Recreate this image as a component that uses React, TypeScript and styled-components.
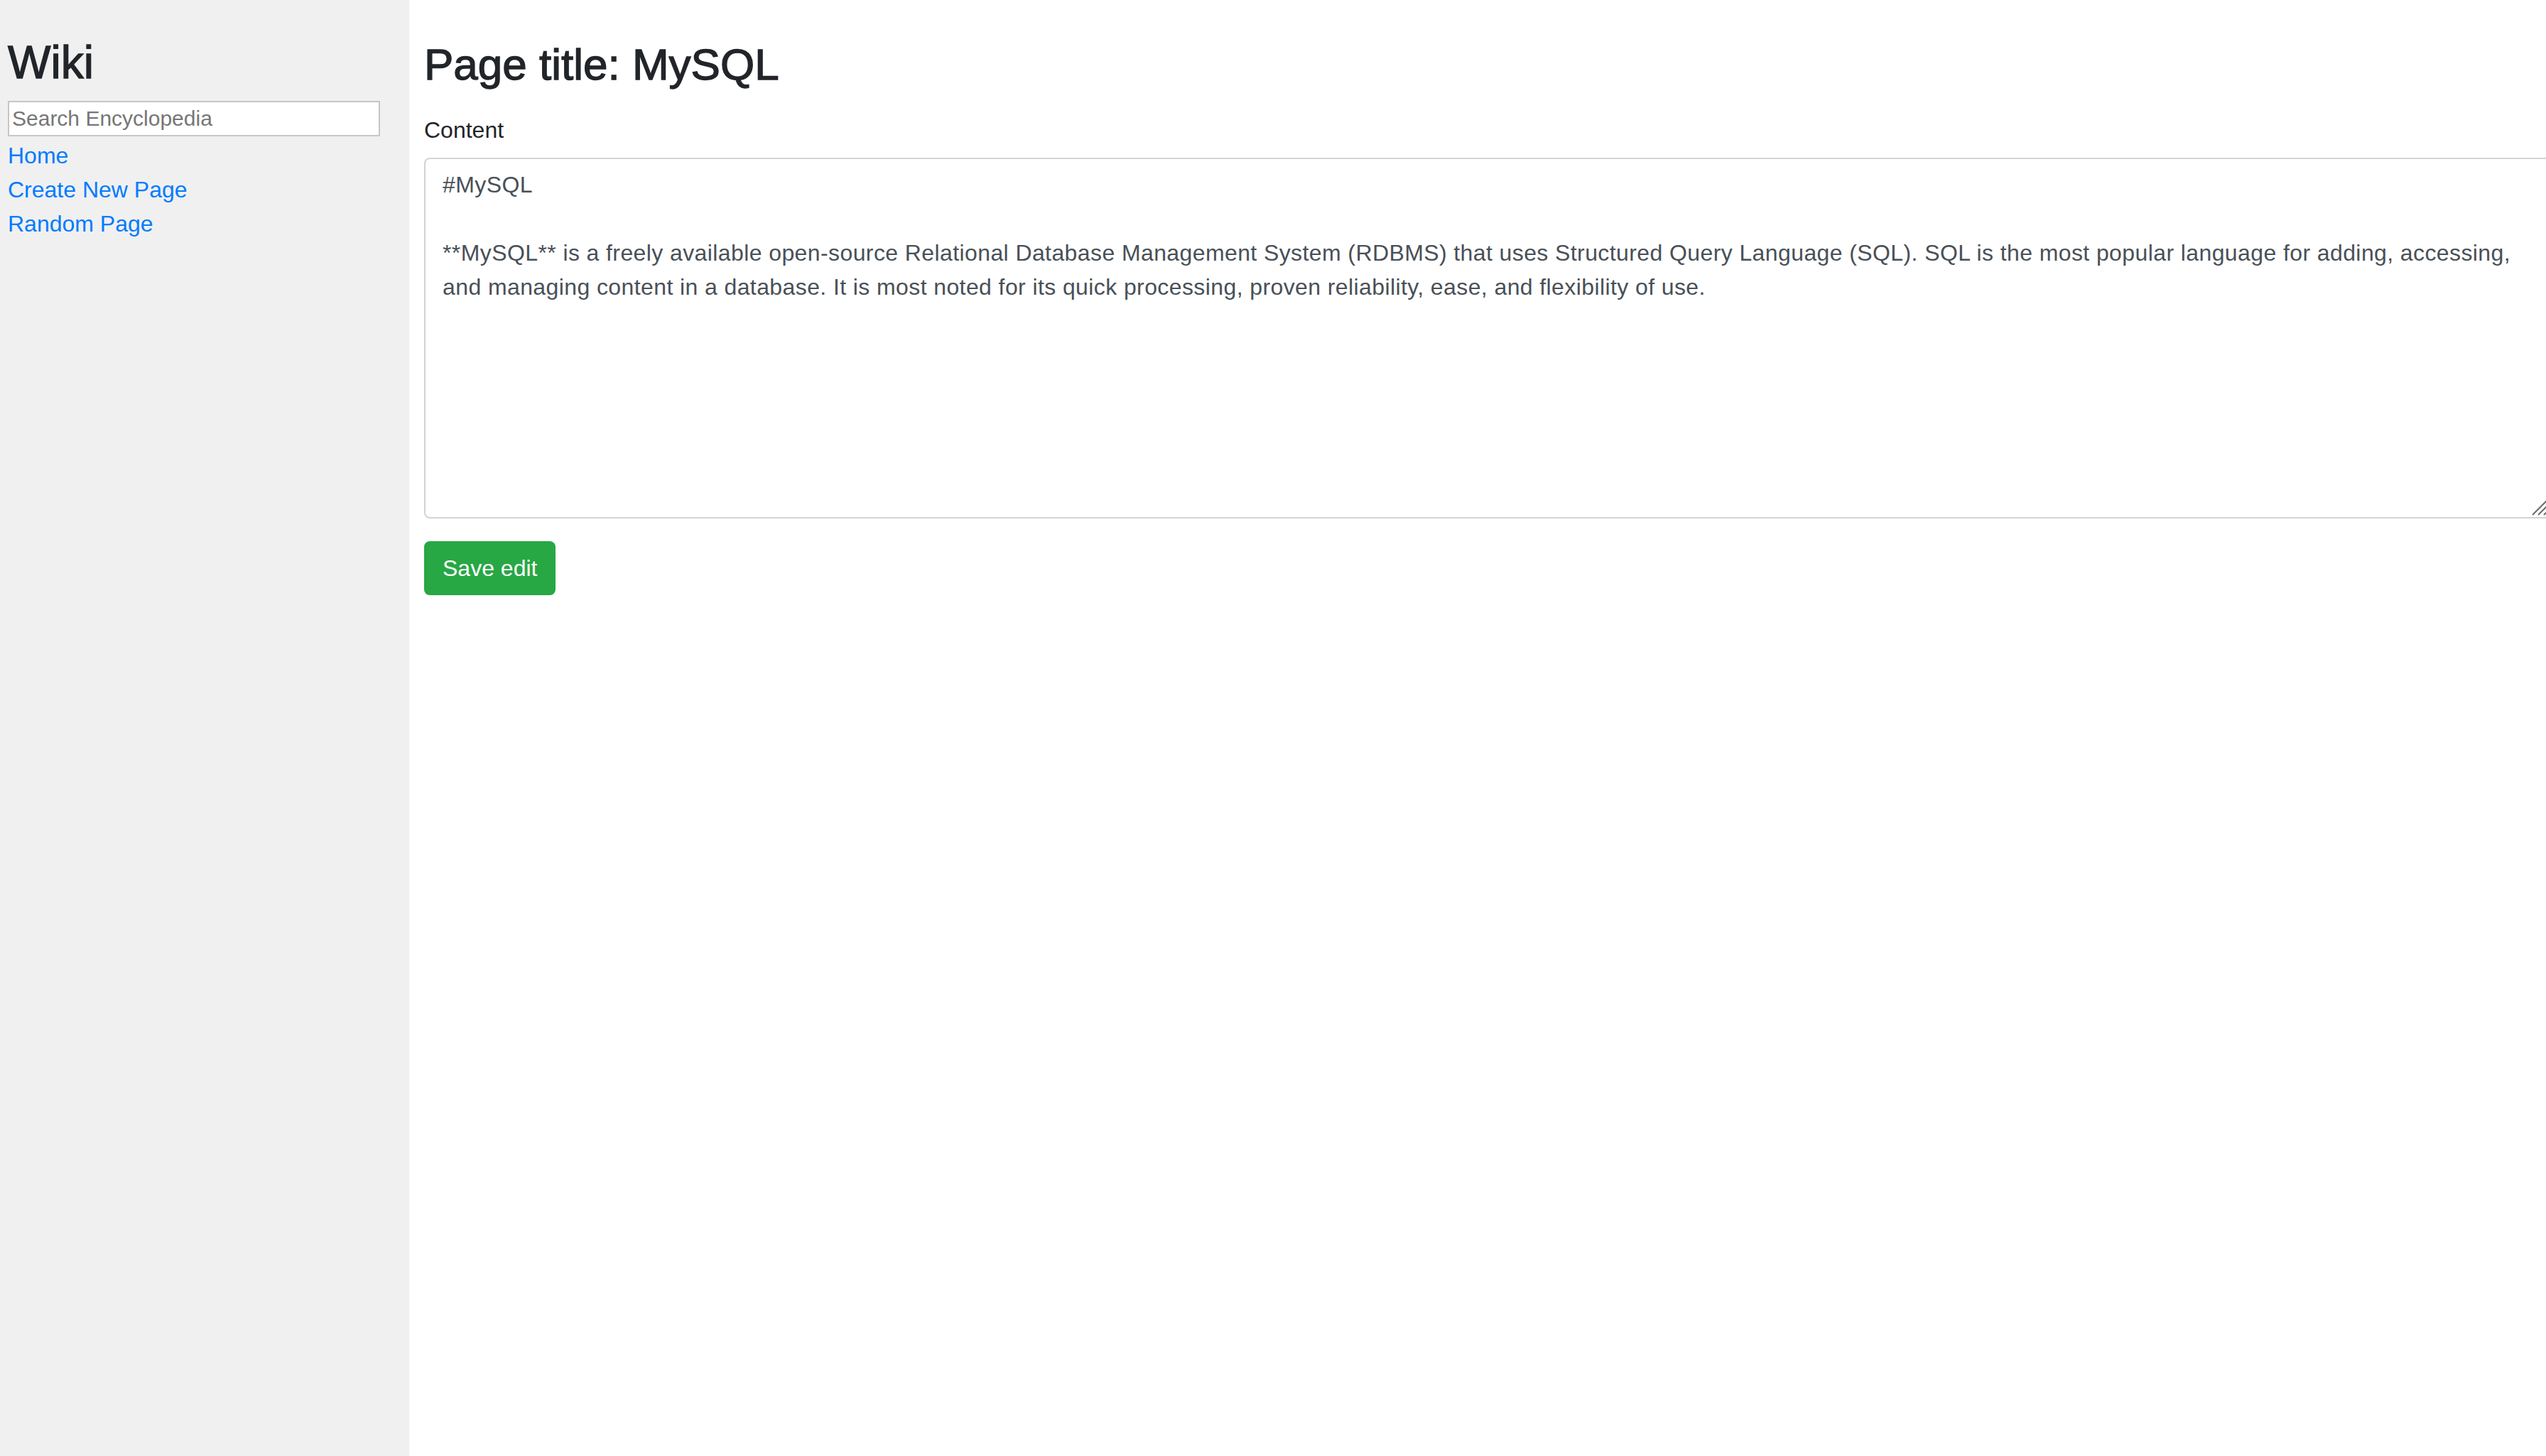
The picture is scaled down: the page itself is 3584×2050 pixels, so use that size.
import styled, { createGlobalStyle } from "styled-components";

const GlobalStyle = createGlobalStyle`
  html, body {
    margin: 0;
    padding: 0;
    background-color: white;
    overflow: hidden;
  }
  body {
    font-family: "Liberation Sans", Arial, sans-serif;
    color: #212529;
  }
  * {
    box-sizing: border-box;
  }
`;

const Layout = styled.div`
  display: flex;
  min-height: 100vh;
`;

const Sidebar = styled.div`
  width: 576px;
  flex-shrink: 0;
  background-color: #f0f0f0;
  padding: 50px 41px 0 11px;
`;

const Brand = styled.h2`
  margin: 0 0 16px;
  font-size: 64px;
  line-height: 76px;
  font-weight: 400;
  -webkit-text-stroke: 1.3px #212529;
  color: #212529;
`;

const Search = styled.input`
  display: block;
  width: 100%;
  height: 50px;
  margin: 0 0 3px;
  padding: 0 4px;
  border: 2px solid #c6c6c6;
  background: white;
  font-family: "Liberation Sans", Arial, sans-serif;
  font-size: 30px;
  line-height: 30px;
  color: #212529;
  outline: none;

  &::placeholder {
    color: #767676;
  }
`;

const NavItem = styled.div`
  font-size: 32px;
  line-height: 48px;
`;

const NavLink = styled.a`
  color: #007bff;
  text-decoration: none;
`;

const Main = styled.div`
  flex: 1;
  min-width: 0;
  padding: 54px 0 0 21px;
`;

const Title = styled.h1`
  margin: 0 0 31px;
  font-size: 62px;
  line-height: 74px;
  font-weight: 400;
  -webkit-text-stroke: 1.3px #212529;
  color: #212529;
`;

const FormGroup = styled.div`
  margin-bottom: 32px;
`;

const Label = styled.label`
  display: block;
  margin-bottom: 15px;
  font-size: 32px;
  line-height: 48px;
  color: #212529;
`;

const EditorWrap = styled.div`
  position: relative;
  width: calc(100% + 6px);
`;

const Editor = styled.textarea`
  display: block;
  width: 100%;
  height: 508px;
  padding: 12px 24px;
  border: 2px solid #ced4da;
  border-radius: 8px;
  background: white;
  font-family: "Liberation Sans", Arial, sans-serif;
  font-size: 32px;
  line-height: 48px;
  letter-spacing: 0.4px;
  color: #495057;
  resize: none;
  outline: none;
`;

const Grip = styled.svg`
  position: absolute;
  right: 2px;
  bottom: 4px;
  width: 24px;
  height: 24px;
  pointer-events: none;
`;

const SaveButton = styled.button`
  display: inline-block;
  padding: 12px 24px;
  border: 2px solid #28a745;
  border-radius: 8px;
  background-color: #28a745;
  color: white;
  font-family: "Liberation Sans", Arial, sans-serif;
  font-size: 32px;
  line-height: 48px;
  cursor: pointer;
`;

const pageText =
  "#MySQL\n\n**MySQL** is a freely available open-source Relational Database Management System (RDBMS) that uses Structured Query Language (SQL). SQL is the most popular language for adding, accessing, and managing content in a database. It is most noted for its quick processing, proven reliability, ease, and flexibility of use.";

const links = ["Home", "Create New Page", "Random Page"];

function App() {
  return (
    <>
      <GlobalStyle />
      <Layout>
        <Sidebar>
          <Brand>Wiki</Brand>
          <form>
            <Search type="text" name="q" placeholder="Search Encyclopedia" />
          </form>
          {links.map((l) => (
            <NavItem key={l}>
              <NavLink href="#">{l}</NavLink>
            </NavItem>
          ))}
        </Sidebar>
        <Main>
          <Title>Page title: MySQL</Title>
          <form>
            <FormGroup>
              <Label htmlFor="content">Content</Label>
              <EditorWrap>
                <Editor id="content" defaultValue={pageText} />
                <Grip viewBox="0 0 24 24">
                  <g stroke="#6b6b6b" strokeWidth="2">
                    <line x1="1" y1="23" x2="23" y2="1" />
                    <line x1="9" y1="23" x2="23" y2="9" />
                    <line x1="17" y1="23" x2="23" y2="17" />
                  </g>
                </Grip>
              </EditorWrap>
            </FormGroup>
            <SaveButton type="button">Save edit</SaveButton>
          </form>
        </Main>
      </Layout>
    </>
  );
}

export default App;
